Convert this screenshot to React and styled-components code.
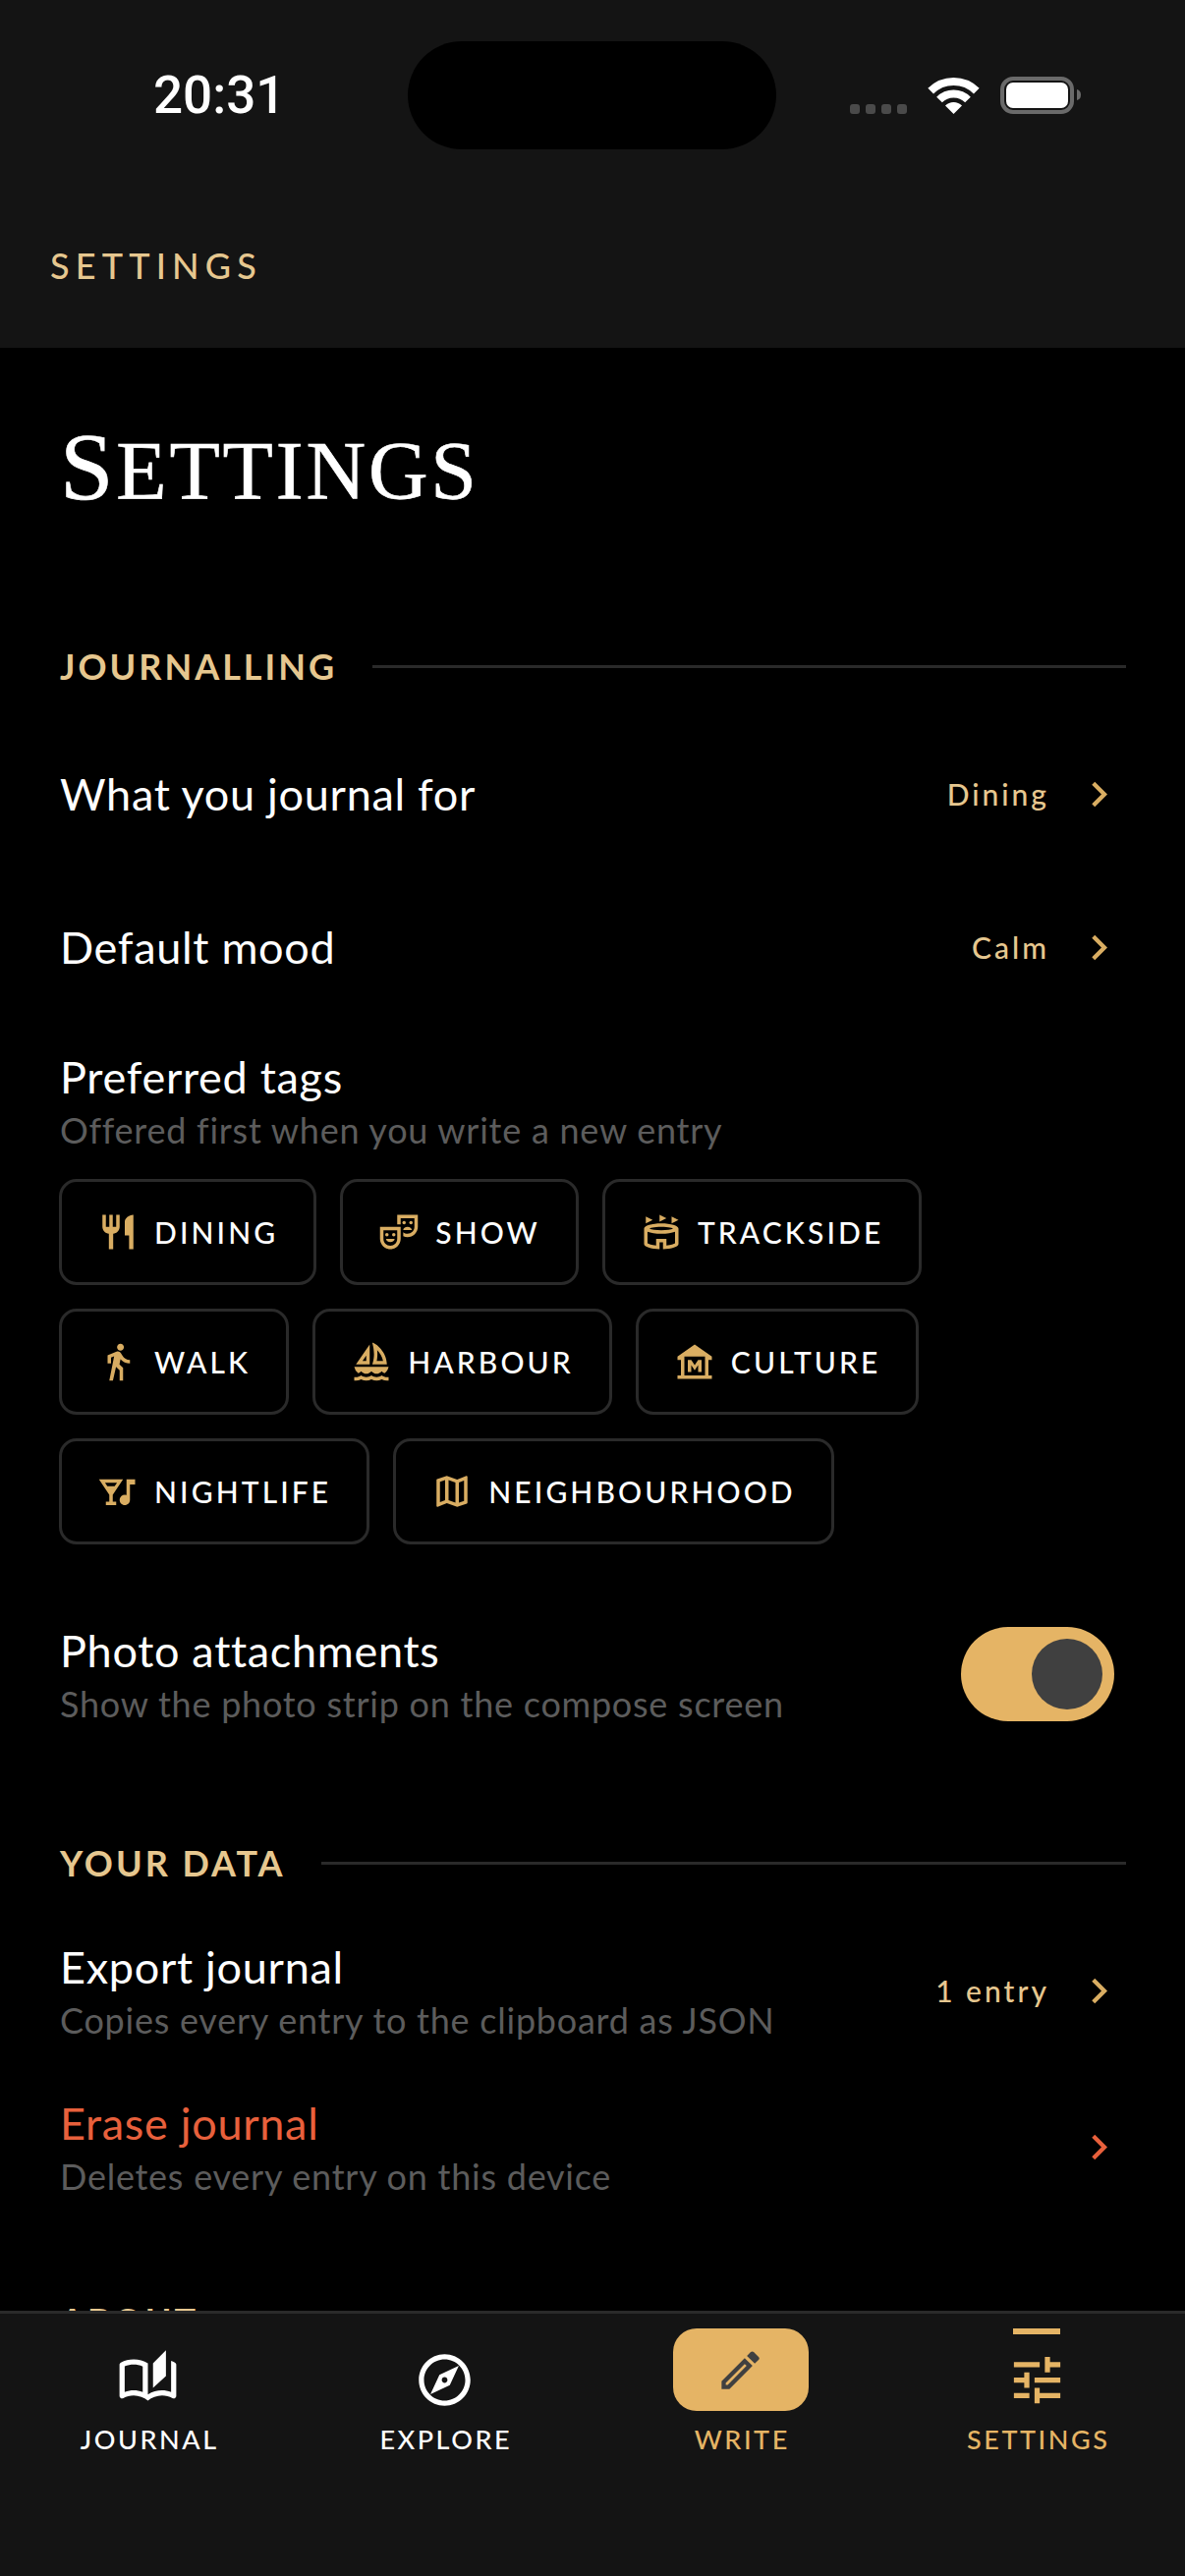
import React from "react";
import styled, { createGlobalStyle } from "styled-components";
import {
  MdRestaurant, MdOutlineTheaterComedy, MdOutlineStadium, MdDirectionsWalk, MdOutlineSailing, MdOutlineMuseum,
  MdNightlife, MdOutlineMap, MdOutlineAutoStories, MdOutlineExplore, MdOutlineEdit, MdTune, MdChevronRight,
} from "react-icons/md";

const GOLD = "#e5b465";
const PALE = "#e6c78f";

const Global = createGlobalStyle`
  html, body { margin: 0; padding: 0; background: #000; }
  * { box-sizing: border-box; }
`;

const Screen = styled.div`
  width: 1206px; height: 2622px; display: flex; flex-direction: column;
  background: #000; overflow: hidden; position: relative;
  font-family: Lato, "Liberation Sans", sans-serif; color: #fff;
`;
const Top = styled.header`
  height: 354px; flex: none; background: #141414; display: flex; flex-direction: column;
`;
const StatusBar = styled.div`
  height: 192px; display: flex; align-items: flex-start; position: relative;
`;
const Time = styled.div`
  margin: 72px 0 0 156px; font: 500 53px/51px Roboto, "Liberation Sans", sans-serif; color: #fff;
`;
const Island = styled.div`
  position: absolute; left: 415px; top: 42px; width: 375px; height: 110px; border-radius: 55px; background: #000;
`;
const StatusIcons = styled.div`
  position: absolute; left: 864px; top: 76px; line-height: 0;
`;
const TopLabel = styled.div`
  margin: 57px 0 0 51px; font-size: 36px; line-height: 42px; letter-spacing: 6.15px; color: ${PALE}; font-weight: 500;
`;
const Body = styled.main`
  flex: 1; min-height: 0; overflow: hidden; padding: 66px 60px 0 61px;
`;
const Title = styled.h1`
  margin: 0; font: 400 84px/110px "Liberation Serif", serif; text-transform: uppercase; letter-spacing: 2.8px; color: #fff;
  -webkit-text-stroke: 0.6px #fff;
  &::first-letter { font-size: 98px; }
`;
const SectionHead = styled.div`
  display: flex; align-items: center; gap: 36px; margin-top: ${p => p.$top}px; height: 48px;
`;
const SectionName = styled.div`
  font-size: 36px; font-weight: 700; letter-spacing: 3px; color: ${PALE}; white-space: nowrap;
`;
const Rule = styled.div`
  flex: 1; height: 3px; background: #2a2a2a;
`;
const Row = styled.div`
  display: flex; align-items: center; justify-content: space-between; height: ${p => p.$h}px; margin-top: ${p => p.$top || 0}px;
`;
const RowText = styled.div`
  display: flex; flex-direction: column;
`;
const RowTitle = styled.div`
  font-size: 45px; line-height: 54px; letter-spacing: 0.7px; font-weight: 400; color: ${p => p.$danger ? "#e8603c" : "#fff"};
`;
const RowSub = styled.div`
  font-size: 36px; line-height: 54px; letter-spacing: 0.75px; color: #5c5c5c;
`;
const RowEnd = styled.div`
  display: flex; align-items: center; gap: 25px; padding-right: 2px; margin-bottom: ${p => p.$raised ? 6 : 0}px; color: ${p => p.$danger ? "#e8603c" : "#d9ad62"};
`;
const RowValue = styled.span`
  font-size: 30px; font-weight: 500; letter-spacing: 3px; color: ${PALE};
`;
const Chips = styled.div`
  display: flex; flex-wrap: wrap; gap: 24px; margin: 23px 0 0 -1px; width: 1000px;
`;
const Chip = styled.div`
  display: flex; align-items: center; gap: 16px; height: 108px; padding: 0 36px; border: 3px solid #2a2a2a; border-radius: 18px;
  font-size: 30px; font-weight: 500; letter-spacing: 3.1px; color: #fff; svg { color: #d9ad62; flex: none; }
`;
const Toggle = styled.div`
  width: 156px; height: 96px; border-radius: 48px; background: ${GOLD}; display: flex; align-items: center; justify-content: flex-end; padding-right: 12px; margin: 0 12px 6px 0;
`;
const Knob = styled.div`
  width: 72px; height: 72px; border-radius: 50%; background: #404040;
`;
const Tabs = styled.nav`
  height: 270px; flex: none; background: #141414; border-top: 3px solid #2a2a2a; display: grid; grid-template-columns: repeat(4, 1fr);
  position: relative; z-index: 1;
`;
const Tab = styled.div`
  display: flex; flex-direction: column; align-items: center; position: relative; padding-top: 15px;
  color: ${p => p.$active ? GOLD : "#fff"};
`;
const TabIcon = styled.div`
  width: 138px; height: 84px; border-radius: 24px; display: flex; justify-content: center;
  align-items: ${p => p.$fill ? "center" : "flex-end"};
  background: ${p => p.$fill ? GOLD : "transparent"}; color: ${p => p.$fill ? "#404040" : "inherit"};
`;
const TabLabel = styled.div`
  margin-top: 11px; padding-left: 3px; font-size: 27px; line-height: 36px; letter-spacing: 2.55px; font-weight: 500;
`;
const TabBar = styled.div`
  position: absolute; top: 15px; left: 50%; transform: translateX(-50%); width: 48px; height: 6px; background: ${GOLD};
`;

const chipRows = [
  [MdRestaurant, "DINING"], [MdOutlineTheaterComedy, "SHOW"], [MdOutlineStadium, "TRACKSIDE"],
  [MdDirectionsWalk, "WALK"], [MdOutlineSailing, "HARBOUR"], [MdOutlineMuseum, "CULTURE"],
  [MdNightlife, "NIGHTLIFE"], [MdOutlineMap, "NEIGHBOURHOOD"],
];

const Signal = () => (
  <svg width="240" height="44" viewBox="0 0 240 44">
    {[1, 17, 33, 49].map(x => <rect key={x} x={x} y="30" width="10" height="10" rx="3" fill="#4a4a4a" />)}
    <path d="M83.2 16.7 A33 33 0 0 1 129.8 16.7" fill="none" stroke="#fff" strokeWidth="8" />
    <path d="M92 25.5 A20.5 20.5 0 0 1 121 25.5" fill="none" stroke="#fff" strokeWidth="8" />
    <path d="M106.5 40 L98 31.5 A12 12 0 0 1 115 31.5 Z" fill="#fff" />
    <rect x="156" y="4" width="71" height="34" rx="11" fill="none" stroke="#6a6a6a" strokeWidth="4" />
    <rect x="160" y="8" width="63" height="26" rx="7" fill="#fff" />
    <path d="M232 15 Q236 16 236 20.5 Q236 25 232 26 Z" fill="#6a6a6a" />
  </svg>
);

export default function App() {
  return (
    <Screen>
      <Global />
      <Top>
        <StatusBar>
          <Time>20:31</Time>
          <Island />
          <StatusIcons><Signal /></StatusIcons>
        </StatusBar>
        <TopLabel>SETTINGS</TopLabel>
      </Top>
      <Body>
        <Title>Settings</Title>
        <SectionHead $top={119}><SectionName>JOURNALLING</SectionName><Rule /></SectionHead>
        <Row $h={108} $top={52}>
          <RowTitle>What you journal for</RowTitle>
          <RowEnd><RowValue>Dining</RowValue><MdChevronRight size={51} /></RowEnd>
        </Row>
        <Row $h={108} $top={48}>
          <RowTitle>Default mood</RowTitle>
          <RowEnd><RowValue>Calm</RowValue><MdChevronRight size={51} /></RowEnd>
        </Row>
        <Row $h={108} $top={51}>
          <RowText>
            <RowTitle>Preferred tags</RowTitle>
            <RowSub>Offered first when you write a new entry</RowSub>
          </RowText>
        </Row>
        <Chips>
          {chipRows.map(([I, t]) => <Chip key={t}><I size={42} />{t}</Chip>)}
        </Chips>
        <Row $h={108} $top={81}>
          <RowText>
            <RowTitle>Photo attachments</RowTitle>
            <RowSub>Show the photo strip on the compose screen</RowSub>
          </RowText>
          <Toggle><Knob /></Toggle>
        </Row>
        <SectionHead $top={111}><SectionName>YOUR DATA</SectionName><Rule /></SectionHead>
        <Row $h={108} $top={55}>
          <RowText>
            <RowTitle>Export journal</RowTitle>
            <RowSub>Copies every entry to the clipboard as JSON</RowSub>
          </RowText>
          <RowEnd $raised><RowValue>1 entry</RowValue><MdChevronRight size={51} /></RowEnd>
        </Row>
        <Row $h={108} $top={51}>
          <RowText>
            <RowTitle $danger>Erase journal</RowTitle>
            <RowSub>Deletes every entry on this device</RowSub>
          </RowText>
          <RowEnd $danger $raised><MdChevronRight size={51} /></RowEnd>
        </Row>
        <SectionHead $top={96}><SectionName>ABOUT</SectionName><Rule /></SectionHead>
      </Body>
      <Tabs>
        <Tab><TabIcon><MdOutlineAutoStories size={63} /></TabIcon><TabLabel>JOURNAL</TabLabel></Tab>
        <Tab><TabIcon><MdOutlineExplore size={63} /></TabIcon><TabLabel>EXPLORE</TabLabel></Tab>
        <Tab $active><TabIcon $fill><MdOutlineEdit size={51} /></TabIcon><TabLabel>WRITE</TabLabel></Tab>
        <Tab $active><TabBar /><TabIcon><MdTune size={63} /></TabIcon><TabLabel>SETTINGS</TabLabel></Tab>
      </Tabs>
    </Screen>
  );
}
